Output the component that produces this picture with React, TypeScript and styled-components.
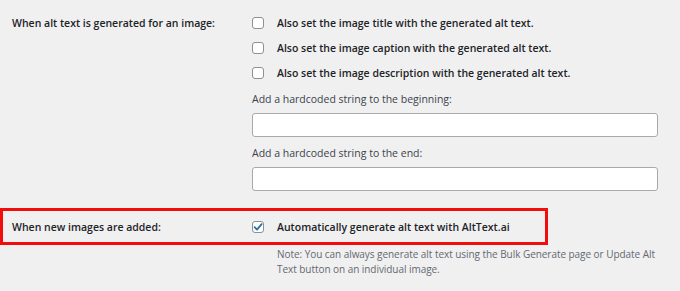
import React from 'react';
import styled, { createGlobalStyle } from 'styled-components';

const GlobalStyle = createGlobalStyle`
    html, body {
        margin: 0;
        padding: 0;
        background: #f0f0f1;
    }
    body {
        font-family: 'Open Sans', 'Noto Sans', sans-serif;
        color: #1d2327;
    }
`

const SettingsPage = styled.div`
    width: 680px;
    height: 291px;
    padding-top: 10px;
    box-sizing: border-box;
    overflow: hidden;
`

const SettingRow = styled.div`
    display: grid;
    grid-template-columns: 240px 1fr;
    align-items: start;
`

const RowLabel = styled.div`
    padding-left: 12px;
    height: 25px;
    display: flex;
    align-items: center;
    font-size: 10.5px;
    font-weight: 600;
    white-space: nowrap;
`

const OptionList = styled.div`
    display: flex;
    flex-direction: column;
    padding-left: 12px;
    width: 406px;
`

const OptionLine = styled.label`
    height: 25px;
    display: flex;
    align-items: center;
    gap: 13px;
    font-size: 10.5px;
    font-weight: 600;
    white-space: nowrap;
`

const Box = styled.span<{ $checked?: boolean }>`
    width: 12px;
    height: 12px;
    flex: 0 0 12px;
    box-sizing: border-box;
    border: 1px solid #8c8f94;
    border-radius: 3px;
    background: #fff;
    display: flex;
    align-items: center;
    justify-content: center;
`

const FieldLabel = styled.div<{ $gap: number }>`
    margin-top: ${p => p.$gap}px;
    line-height: 15px;
    font-size: 10.5px;
    color: #3c434a;
`

const TextField = styled.input`
    display: block;
    width: 100%;
    height: 24px;
    margin-top: 6px;
    box-sizing: border-box;
    border: 1px solid #a7aaad;
    border-radius: 3px;
    background: #fff;
    outline: none;
`

const Highlight = styled.div`
    margin-top: 17px;
    width: 548px;
    height: 37px;
    box-sizing: border-box;
    border: 3px solid #f20d0d;
    display: grid;
    grid-template-columns: 237px 1fr;
    align-items: center;

    ${RowLabel} {
        padding-left: 9px;
    }
    ${OptionList} {
        padding-left: 12px;
    }
`

const Note = styled.p`
    margin: 2px 0 0 277px;
    width: 385px;
    font-size: 10px;
    letter-spacing: -0.05px;
    line-height: 15px;
    color: #646970;
`

function Checkbox({ checked }: { checked?: boolean }) {
    return (
        <Box $checked={checked}>
            {checked && (
                <svg width="10" height="10" viewBox="0 0 10 10">
                    <path d="M1.6 5.2 L4 7.6 L8.6 2.2" fill="none" stroke="#2271b1" strokeWidth="1.8" strokeLinecap="round" strokeLinejoin="round" />
                </svg>
            )}
        </Box>
    );
}

function App() {
    return (
        <SettingsPage>
            <GlobalStyle />
            <SettingRow>
                <RowLabel>When alt text is generated for an image:</RowLabel>
                <OptionList>
                    <OptionLine><Checkbox />Also set the image title with the generated alt text.</OptionLine>
                    <OptionLine><Checkbox />Also set the image caption with the generated alt text.</OptionLine>
                    <OptionLine><Checkbox />Also set the image description with the generated alt text.</OptionLine>
                    <FieldLabel $gap={7}>Add a hardcoded string to the beginning:</FieldLabel>
                    <TextField type="text" />
                    <FieldLabel $gap={9}>Add a hardcoded string to the end:</FieldLabel>
                    <TextField type="text" />
                </OptionList>
            </SettingRow>
            <Highlight>
                <RowLabel>When new images are added:</RowLabel>
                <OptionList>
                    <OptionLine><Checkbox checked />Automatically generate alt text with AltText.ai</OptionLine>
                </OptionList>
            </Highlight>
            <Note>
                Note: You can always generate alt text using the Bulk Generate page or Update Alt Text button on an individual image.
            </Note>
        </SettingsPage>
    );
}

export default App;
